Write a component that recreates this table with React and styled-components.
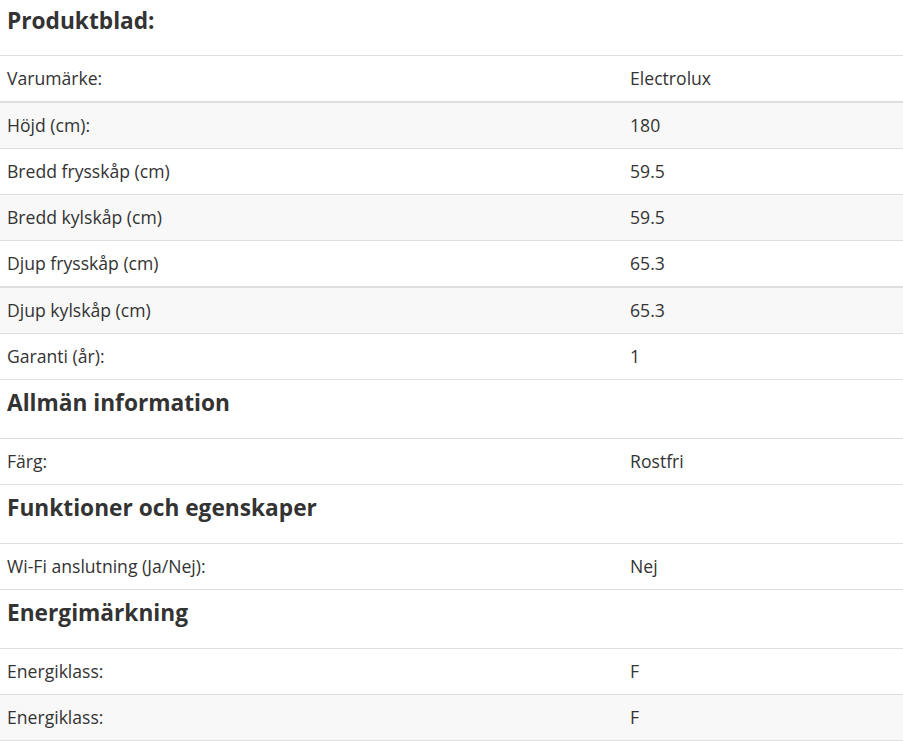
import React from 'react';
import styled, { createGlobalStyle } from 'styled-components';

const sections = [
    {
        title: 'Produktblad:',
        rows: [
            { label: 'Varumärke:', value: 'Electrolux' },
            { label: 'Höjd (cm):', value: '180', thick: true },
            { label: 'Bredd frysskåp (cm)', value: '59.5' },
            { label: 'Bredd kylskåp (cm)', value: '59.5' },
            { label: 'Djup frysskåp (cm)', value: '65.3' },
            { label: 'Djup kylskåp (cm)', value: '65.3', thick: true },
            { label: 'Garanti (år):', value: '1' }
        ]
    },
    {
        title: 'Allmän information',
        rows: [{ label: 'Färg:', value: 'Rostfri' }]
    },
    {
        title: 'Funktioner och egenskaper',
        rows: [{ label: 'Wi-Fi anslutning (Ja/Nej):', value: 'Nej' }]
    },
    {
        title: 'Energimärkning',
        rows: [
            { label: 'Energiklass:', value: 'F' },
            { label: 'Energiklass:', value: 'F' }
        ]
    }
];

const App = () => {
    return (
        <>
            <GlobalStyle />
            <Sheet>
                {sections.map((section, sIndex) => (
                    <Section key={sIndex}>
                        <Heading $first={sIndex === 0}>{section.title}</Heading>
                        <Table>
                            {section.rows.map((row, index) => (
                                <Row key={index} $striped={index % 2 === 1} $thick={row.thick}>
                                    <Cell>{row.label}</Cell>
                                    <Cell>{row.value}</Cell>
                                </Row>
                            ))}
                        </Table>
                    </Section>
                ))}
            </Sheet>
        </>
    );
};

const GlobalStyle = createGlobalStyle`
    body{
        margin:0;
        background:#fff;
        font-family:"Open Sans", "Noto Sans", sans-serif;
        color:#333;
    }
`;

const Sheet = styled.div`
    display:flex;
    flex-direction:column;
`;

const Section = styled.section`
    display:flex;
    flex-direction:column;
`;

const Heading = styled.h2`
    margin:0;
    padding:${props => props.$first ? '4px 7px 18px' : '6px 7px 19px'};
    font-size:22.7px;
    line-height:33px;
    font-weight:700;
    color:#333;
`;

const Table = styled.div`
    display:flex;
    flex-direction:column;
    border-bottom:1px solid #dedede;
`;

const Row = styled.div`
    display:grid;
    grid-template-columns:69% 31%;
    border-top:${props => props.$thick ? '2px' : '1px'} solid #dedede;
    background:${props => props.$striped ? '#f8f8f8' : '#fff'};
`;

const Cell = styled.div`
    padding:10px 7px 11px;
    font-size:17.6px;
    line-height:24px;
    color:#333;
`;

export default App;
